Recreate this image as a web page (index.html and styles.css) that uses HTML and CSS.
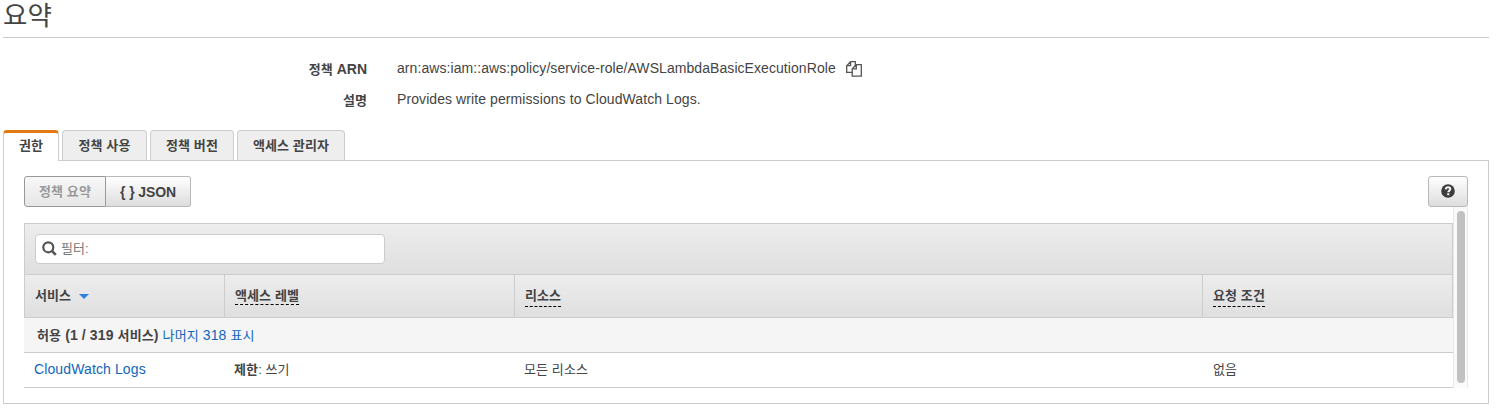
FILE: index.html
```
<!DOCTYPE html>
<html lang="ko">
<head>
<meta charset="utf-8">
<title>요약</title>
<link rel="stylesheet" href="styles.css">
</head>
<body>
<main class="page">
  <h1 class="title">요약</h1>
  <dl class="details">
    <dt><span class="ko">정책</span> <span class="acronym">ARN</span></dt>
    <dd><span class="arn">arn:aws:iam::aws:policy/service-role/AWSLambdaBasicExecutionRole</span>
      <svg class="copy" width="16" height="16" viewBox="0 0 16 16" fill="#fff" stroke="#555" stroke-width="1.3"><path d="M4.6.7H9.3V11.3H.7V4.7zM4.6.7V4.7H.7"/><path d="M10.3 3.7H15.3V15.2H6.2V7.8zM10.3 3.7V7.8H6.2"/></svg>
    </dd>
    <dt><span class="ko">설명</span></dt>
    <dd><span class="desc">Provides write permissions to CloudWatch Logs.</span></dd>
  </dl>
  <nav class="tabs">
    <a class="tab tab-active">권한</a>
    <a class="tab tab-usage">정책 사용</a>
    <a class="tab tab-version">정책 버전</a>
    <a class="tab tab-advisor">액세스 관리자</a>
  </nav>
  <section class="panel">
    <div class="toolbar">
      <div class="group">
        <button class="btn btn-summary">정책 요약</button><button class="btn btn-json">{ } JSON</button>
      </div>
      <button class="btn btn-help"><svg width="14" height="14" viewBox="0 0 14 14"><circle cx="7" cy="7" r="6.8" fill="#3c3c3c"/><path d="M4.7 5.4C4.9 3.9 5.9 3.3 7.1 3.3c1.3 0 2.2.7 2.2 1.8 0 1.5-2 1.5-2 3.1" fill="none" stroke="#f4f4f4" stroke-width="2"/><path d="M6.2 9.2h2.1v2h-2.1z" fill="#f4f4f4"/></svg></button>
    </div>
    <div class="scroller">
      <div class="grid">
        <div class="filter">
          <div class="search">
            <svg width="15" height="15" viewBox="0 0 15 15" fill="none" stroke="#555" stroke-width="2.2"><circle cx="6.3" cy="6.3" r="5"/><path d="M9.8 9.8l4 4" stroke-width="2.6"/></svg>
            <span>필터:</span>
          </div>
        </div>
        <div class="row head">
          <div>서비스 <i class="sort"></i></div>
          <div><span class="hint hint-level">액세스 레벨</span></div>
          <div><span class="hint">리소스</span></div>
          <div><span class="hint">요청 조건</span></div>
        </div>
        <div class="allow"><b><span class="ko">허용</span> (1 / 319 <span class="ko">서비스</span>)</b> <a><span class="ko">나머지</span> 318 <span class="ko">표시</span></a></div>
        <div class="row data">
          <div><a class="service">CloudWatch Logs</a></div>
          <div class="ko"><b>제한</b>: 쓰기</div>
          <div class="ko">모든 리소스</div>
          <div class="ko condition">없음</div>
        </div>
      </div>
      <div class="track"><div class="thumb"></div></div>
    </div>
  </section>
</main>
</body>
</html>
```
FILE: styles.css
```
* { box-sizing: border-box; }
body {
  margin: 0;
  background: #fff;
  color: #444;
  font: 14px/20px "Liberation Sans", "Noto Sans CJK KR", sans-serif;
}
.page { width: 1486px; margin-left: 3px; }
.title {
  height: 38px;
  margin: 0;
  padding-top: 1px;
  border-bottom: 1px solid #ccc;
  font-size: 26.5px;
  font-weight: 400;
  line-height: 30px;
}
.ko { font-size: 13px; letter-spacing: .1px; }
.details {
  display: grid;
  grid-template-columns: 364px 1fr;
  grid-auto-rows: 31px;
  column-gap: 30px;
  height: 92px;
  margin: 0;
  padding-top: 16px;
  line-height: 30px;
}
.details dt { text-align: right; font-weight: 700; }
.details dd { display: flex; align-items: center; gap: 10px; height: 27px; margin: 0; }
.arn { letter-spacing: .068px; }
.desc { letter-spacing: .085px; }
.copy { margin-top: 2px; }
.tabs { display: flex; gap: 3px; height: 30px; }
.tab {
  height: 30px;
  border: 1px solid #ccc;
  border-bottom: 0;
  border-radius: 4px 4px 0 0;
  background: #eee;
  color: #444;
  font-size: 13px;
  font-weight: 700;
  letter-spacing: .1px;
  line-height: 30px;
  text-align: center;
}
.tab-active {
  z-index: 1;
  width: 56px;
  height: 31px;
  border-top: 3px solid #e47911;
  background: #fff;
  line-height: 26px;
}
.tab-usage { width: 85px; }
.tab-version { width: 84px; }
.tab-advisor { width: 108px; }
.panel {
  height: 244px;
  padding: 15px 20px;
  border: 1px solid #ccc;
}
.toolbar { display: flex; justify-content: space-between; }
.group { display: flex; }
.btn {
  height: 31px;
  padding: 0;
  border: 1px solid #b8b8b8;
  border-radius: 3px;
  background: linear-gradient(#fff, #ddd);
  color: #444;
  font: 700 14px/29px "Liberation Sans", "Noto Sans CJK KR", sans-serif;
}
.btn-summary {
  width: 82px;
  border-color: #999;
  border-radius: 3px 0 0 3px;
  background: linear-gradient(#f8f8f8, #e6e6e6);
  color: #999;
  font-size: 13px;
  letter-spacing: .1px;
}
.btn-json {
  width: 85px;
  padding-top: 1px;
  border-left: 0;
  border-radius: 0 3px 3px 0;
  letter-spacing: -.1px;
}
.btn-help { display: flex; align-items: center; justify-content: center; width: 40px; padding-bottom: 1px; }
.scroller { display: flex; height: 181px; }
.grid { width: 1429px; padding-top: 16px; }
.filter {
  height: 51px;
  padding: 10px;
  border: 1px solid #ccc;
  border-bottom: 0;
  background: linear-gradient(#ededed, #dfdfdf);
}
.search {
  display: flex;
  align-items: center;
  gap: 4px;
  width: 350px;
  height: 30px;
  padding: 0 0 1px 6px;
  border: 1px solid #ccc;
  border-radius: 4px;
  background: #fff;
  color: #777;
  font-size: 13px;
  letter-spacing: .1px;
}
.row { display: grid; grid-template-columns: 200px 290px 688px 1fr; }
.head {
  height: 44px;
  border: 1px solid #ccc;
  background: linear-gradient(#ededed, #dfdfdf);
  font-size: 13px;
  font-weight: 700;
  letter-spacing: .1px;
}
.head > div { padding: 11px 10px 0; border-right: 1px solid #ccc; }
.head > div:last-child { border-right: 0; }
.sort {
  display: inline-block;
  margin-left: 4px;
  border: 5px solid transparent;
  border-top-color: #2f82dd;
  border-bottom: 0;
  vertical-align: 1px;
}
.hint { display: inline-block; height: 21px; border-bottom: 1px dashed #000; }
.hint-level { height: 19px; }
.allow {
  height: 35px;
  padding-left: 13px;
  border-bottom: 1px solid #ccc;
  background: #f5f5f5;
  letter-spacing: .12px;
  line-height: 34px;
}
a { color: #1166bb; }
.data { height: 35px; border-bottom: 1px solid #ccc; line-height: 33px; }
.data > div { padding-left: 10px; }
.data > .condition { padding-left: 11px; }
.service { letter-spacing: .12px; }
.track {
  width: 15px;
  height: 181px;
  padding: 4px 3px 5px;
  border: solid #e8e8e8;
  border-width: 0 1px;
  background: #fafafa;
}
.thumb { width: 8px; height: 172px; border-radius: 4px; background: #c1c1c1; }
```
